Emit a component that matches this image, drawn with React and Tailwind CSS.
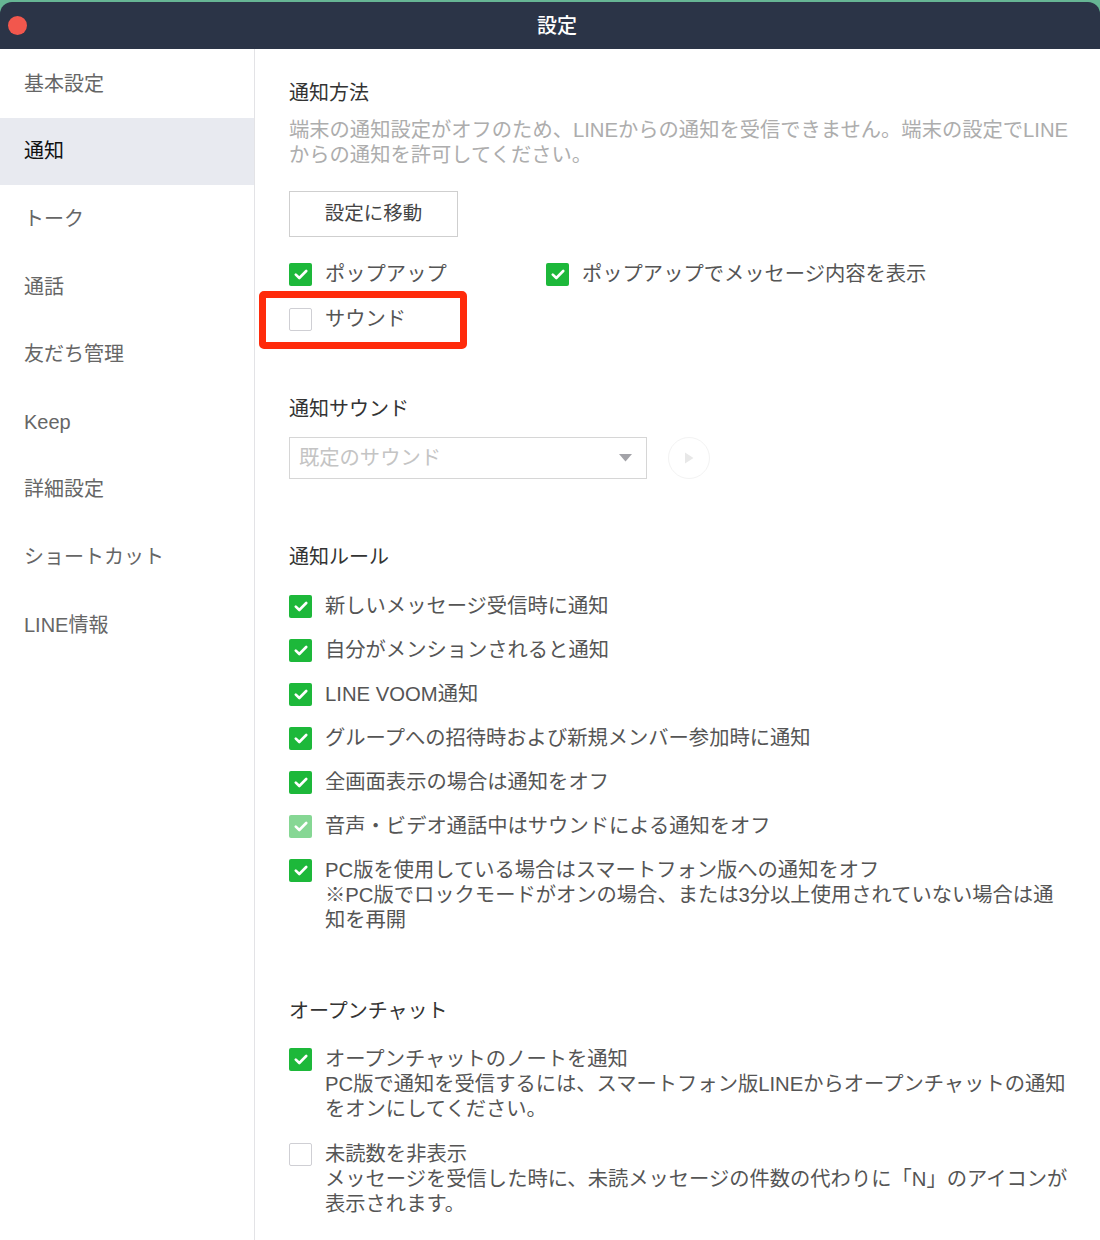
import React from "react";

const menu = ["基本設定", "通知", "トーク", "通話", "友だち管理", "Keep", "詳細設定", "ショートカット", "LINE情報"];

function Check({ checked, faded }) {
  if (!checked) {
    return <span className="mt-[1px] h-[23px] w-[23px] shrink-0 rounded-[2px] border border-[#cfcfd4] bg-white" />;
  }
  return (
    <span
      className={
        "mt-[1px] flex h-[23px] w-[23px] shrink-0 items-center justify-center rounded-[2px] " +
        (faded ? "bg-[#86d794]" : "bg-[#1db83a]")
      }
    >
      <svg width="14" height="11" viewBox="0 0 14 11" fill="none">
        <path d="M1.8 5.6 L5.3 9 L12.2 2" stroke="white" strokeWidth="2.6" strokeLinecap="round" strokeLinejoin="round" />
      </svg>
    </span>
  );
}

function Option({ checked = true, faded, children, className = "" }) {
  return (
    <div className={"flex items-start gap-[13px] " + className}>
      <Check checked={checked} faded={faded} />
      <div className="text-[20.3px] leading-[25px] text-[#555]">{children}</div>
    </div>
  );
}

export default function App() {
  return (
    <div className="relative h-[1240px] w-[1100px] overflow-hidden bg-[#66b594] font-[family-name:'Liberation_Sans','Noto_Sans_CJK_JP',sans-serif]">
      {/* window title */}
      <div className="mt-[2px] flex h-[47px] items-center rounded-t-[12px] bg-[#2b3447] px-[8px]">
        <span className="h-[19px] w-[19px] rounded-full bg-[#f2574d]" />
        <div className="flex-1 pr-[5px] text-center text-[20px] font-medium text-white">設定</div>
      </div>

      <div className="flex h-[1191px] bg-white">
        {/* sidebar */}
        <div className="w-[255px] shrink-0 border-r border-[#e3e3e6] pt-[1px]">
          {menu.map((m, i) => (
            <div
              key={m}
              className={
                "flex h-[67.6px] items-center pl-[24px] text-[20px] " +
                (i === 1 ? "bg-[#e8eaf0] text-[#111]" : "text-[#666]")
              }
            >
              {m}
            </div>
          ))}
        </div>

        {/* content */}
        <div className="flex-1 pl-[34px] pr-[20px] pt-[30px]">
          <h2 className="text-[20px] leading-[28px] text-[#333]">通知方法</h2>
          <p className="mt-[11px] text-[20.3px] leading-[25px] text-[#adadad]">
            端末の通知設定がオフのため、LINEからの通知を受信できません。端末の設定でLINE
            <br />
            からの通知を許可してください。
          </p>
          <button className="mt-[23px] h-[46px] w-[169px] border border-[#cfcfcf] bg-white text-[19.5px] text-[#444]">
            設定に移動
          </button>

          <div className="mt-[25px] flex">
            <Option className="w-[257px]">ポップアップ</Option>
            <Option>ポップアップでメッセージ内容を表示</Option>
          </div>
          <Option checked={false} className="mt-[20px]">サウンド</Option>

          <h2 className="mt-[63px] text-[20px] leading-[28px] text-[#333]">通知サウンド</h2>
          <div className="mt-[14px] flex items-center">
            <div className="flex h-[42px] w-[358px] items-center justify-between border border-[#d6d6d6] pl-[9px] pr-[14px]">
              <span className="text-[20.3px] text-[#c4c4c4]">既定のサウンド</span>
              <svg width="13" height="8" viewBox="0 0 13 8">
                <path d="M0 0 H13 L6.5 7.5 Z" fill="#a3a3a8" />
              </svg>
            </div>
            <div className="ml-[21px] flex h-[42px] w-[42px] items-center justify-center rounded-full border border-[#f3f3f3]">
              <svg width="10" height="12" viewBox="0 0 10 12">
                <path d="M1 0.5 L9.5 6 L1 11.5 Z" fill="#e8e8e8" />
              </svg>
            </div>
          </div>

          <h2 className="mt-[64px] text-[20px] leading-[28px] text-[#333]">通知ルール</h2>
          <div className="mt-[23px] flex flex-col gap-[19px]">
            <Option>新しいメッセージ受信時に通知</Option>
            <Option>自分がメンションされると通知</Option>
            <Option>LINE VOOM通知</Option>
            <Option>グループへの招待時および新規メンバー参加時に通知</Option>
            <Option>全画面表示の場合は通知をオフ</Option>
            <Option faded>音声・ビデオ通話中はサウンドによる通知をオフ</Option>
            <Option>
              PC版を使用している場合はスマートフォン版への通知をオフ
              <br />
              ※PC版でロックモードがオンの場合、または3分以上使用されていない場合は通
              <br />
              知を再開
            </Option>
          </div>

          <h2 className="mt-[64px] text-[20px] leading-[28px] text-[#333]">オープンチャット</h2>
          <div className="mt-[22px] flex flex-col gap-[20px]">
            <Option>
              オープンチャットのノートを通知
              <br />
              PC版で通知を受信するには、スマートフォン版LINEからオープンチャットの通知
              <br />
              をオンにしてください。
            </Option>
            <Option checked={false}>
              未読数を非表示
              <br />
              メッセージを受信した時に、未読メッセージの件数の代わりに「N」のアイコンが
              <br />
              表示されます。
            </Option>
          </div>
        </div>
      </div>

      {/* red highlight over the sound option */}
      <div className="absolute left-[259px] top-[291px] h-[58px] w-[208px] rounded-[5px] border-[7px] border-[#ff2b0b]" />
    </div>
  );
}
